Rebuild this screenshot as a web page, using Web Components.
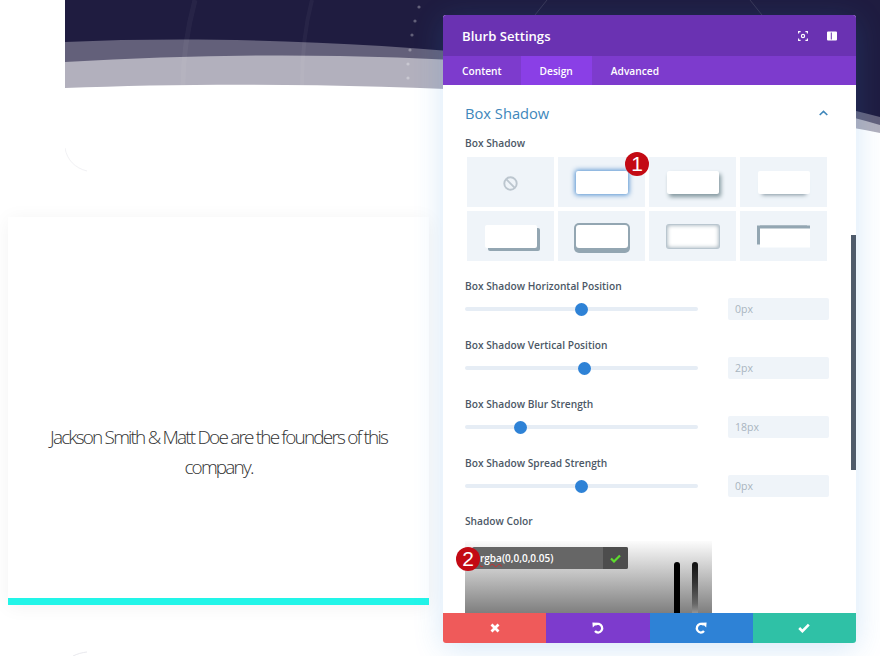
<!DOCTYPE html>
<html>
<head>
<meta charset="utf-8">
<style>
  html, body { margin: 0; padding: 0; background: #fff; }
  body { width: 880px; height: 656px; overflow: hidden; position: relative; font-family: "Open Sans", sans-serif; }
</style>
</head>
<body>
<hero-band></hero-band>
<blurb-card>Jackson Smith &amp; Matt Doe are the founders of this company.</blurb-card>
<settings-panel title="Blurb Settings">
  <section-head>Box Shadow</section-head>
  <field-label>Box Shadow</field-label>
  <shadow-presets></shadow-presets>
  <range-field label="Box Shadow Horizontal Position" value="0px" pos="50"></range-field>
  <range-field label="Box Shadow Vertical Position" value="2px" pos="51.5"></range-field>
  <range-field label="Box Shadow Blur Strength" value="18px" pos="24"></range-field>
  <range-field label="Box Shadow Spread Strength" value="0px" pos="50"></range-field>
  <field-label style="margin-top:16px">Shadow Color</field-label>
  <color-picker value="(0,0,0,0.05)"></color-picker>
</settings-panel>
<step-badge style="left:625px;top:152px">1</step-badge>
<step-badge style="left:456px;top:547px">2</step-badge>

<script>
// Decorative header band behind the panel
class HeroBand extends HTMLElement {
    constructor() {
        super();
        this.attachShadow({ mode: 'open' }).innerHTML = `
            <style>
                :host { display: block; position: absolute; left: 65px; top: 0; width: 815px; height: 656px; }
                svg { display: block; }
            </style>
            <svg width="815" height="656" viewBox="0 0 815 656">
                <path d="M815 0V133C600 90 250 78 0 88V0Z" fill="#b2b0bd"/>
                <path d="M815 0V125C600 62 300 44 0 62V0Z" fill="#63607a"/>
                <path d="M815 0V117C600 62 260 30 0 42V0Z" fill="#1f1c40"/>
                <path d="M130 0C122 30 118 60 118 85" fill="none" stroke="#fff" stroke-opacity=".04" stroke-width="5"/>
                <path d="M247 0C239 30 237 60 237 85" fill="none" stroke="#fff" stroke-opacity=".04" stroke-width="4"/>
                <path d="M482 0L470 15M685 0L697 15" fill="none" stroke="#fff" stroke-opacity=".12" stroke-width="1"/>
                <g fill="#fff" fill-opacity=".3">
                    <circle cx="354" cy="7" r="1.6"/>
                    <circle cx="350" cy="21" r="1.6"/>
                    <circle cx="347" cy="35" r="1.6"/>
                    <circle cx="345" cy="50" r="1.6"/>
                    <circle cx="343" cy="64" r="1.6"/>
                    <circle cx="343" cy="78" r="1.6"/>
                </g>
                <path d="M0 148C2 160 10 168 22 171" fill="none" stroke="#f1f1f4" stroke-width="1"/>
                <path d="M8 656C12 654 17 652.5 22 652" fill="none" stroke="#e9e9ee" stroke-width="1"/>
            </svg>`;
    }
}

class BlurbCard extends HTMLElement {
    constructor() {
        super();
        this.attachShadow({ mode: 'open' }).innerHTML = `
            <style>
                :host {
                    display: flex; align-items: center; justify-content: center; box-sizing: border-box;
                    position: absolute; left: 8px; top: 217px; width: 421px; height: 388px;
                    padding: 89px 30px 0; background: #fff;
                    border-bottom: 7px solid #22f5e8;
                    box-shadow: 0 2px 18px rgba(0,0,0,.05);
                    font: 300 19px/30px "Open Sans", sans-serif; letter-spacing: -1.82px;
                    color: #333; text-align: center;
                }
            </style>
            <slot></slot>`;
    }
}

class SettingsPanel extends HTMLElement {
    constructor() {
        super();
        this.attachShadow({ mode: 'open' }).innerHTML = `
            <style>
                :host {
                    display: flex; flex-direction: column; position: absolute; left: 443px; top: 15px;
                    width: 413px; height: 628px; background: #fff; border-radius: 3px;
                    box-shadow: 0 5px 30px rgba(43,135,218,.2); font-family: "Open Sans", sans-serif;
                }
                header {
                    height: 41px; flex: none; display: flex; align-items: center; justify-content: space-between;
                    padding: 0 19px; background: #6a32b2; color: #fff; border-radius: 3px 3px 0 0;
                    font-size: 13.1px; font-weight: 600;
                }
                .icons { display: flex; gap: 19px; }
                .icons svg { display: block; }
                nav { height: 29px; flex: none; display: flex; background: #7d3bcd; color: #fff; font-size: 10.2px; font-weight: 600; }
                nav span { display: flex; align-items: center; padding: 0 19px; }
                nav .on { background: #8a3fe6; }
                main { flex: 1; position: relative; padding: 0 26px 0 22px; overflow: hidden; }
                .thumb { position: absolute; right: 0; top: 150px; width: 5px; height: 235px; background: #4f5b6b; }
                footer { height: 30px; flex: none; display: grid; grid-template-columns: repeat(4, 1fr); position: relative; }
                footer span { display: flex; align-items: center; justify-content: center; }
                footer span:first-child { border-radius: 0 0 0 3px; }
                footer span:last-child { border-radius: 0 0 3px 0; }
            </style>
            <header>
                <span>${this.getAttribute('title')}</span>
                <span class="icons">
                    <svg width="10" height="10" viewBox="0 0 10 10" fill="none" stroke="#fff" stroke-width="1.1">
                        <path d="M.6 2.6V.6H2.6M7.4 .6h2V2.6M9.4 7.4v2h-2M2.6 9.4H.6v-2"/>
                        <circle cx="5" cy="5" r="1.6" stroke-width="1.2"/>
                    </svg>
                    <svg width="10" height="10" viewBox="0 0 10 10">
                        <path fill="#fff" fill-rule="evenodd" d="M1 .5h8a1 1 0 011 1v7a1 1 0 01-1 1H1a1 1 0 01-1-1v-7a1 1 0 011-1zM3.8 1.5v7h1v-7z"/>
                    </svg>
                </span>
            </header>
            <nav><span>Content</span><span class="on">Design</span><span>Advanced</span></nav>
            <main><slot></slot><div class="thumb"></div></main>
            <footer>
                <span style="background:#ef5a5a">
                    <svg width="10" height="10" viewBox="0 0 10 10"><path d="M1.5 1.5l7 7M8.5 1.5l-7 7" stroke="#fff" stroke-width="2.8" fill="none"/></svg>
                </span>
                <span style="background:#7d3bcd">
                    <svg width="12" height="12" viewBox="0 0 12 12" fill="none"><path d="M3 2.8A4.4 4.4 0 116.2 10.6 4.4 4.4 0 013 9" stroke="#fff" stroke-width="2.3"/><path d="M.4 .4L5.6 .8 .8 5.6z" fill="#fff"/></svg>
                </span>
                <span style="background:#2e82d6">
                    <svg width="12" height="12" viewBox="0 0 12 12" fill="none"><path d="M9 2.8A4.4 4.4 0 105.8 10.6 4.4 4.4 0 009 9" stroke="#fff" stroke-width="2.3"/><path d="M11.6 .4L6.4 .8l4.8 4.8z" fill="#fff"/></svg>
                </span>
                <span style="background:#2fc1a6">
                    <svg width="12" height="10" viewBox="0 0 12 10"><path d="M1.2 5l3.2 3.2L10.8 1.6" stroke="#fff" stroke-width="2.6" fill="none"/></svg>
                </span>
            </footer>`;
    }
}

class SectionHead extends HTMLElement {
    constructor() {
        super();
        this.attachShadow({ mode: 'open' }).innerHTML = `
            <style>
                :host {
                    display: flex; align-items: center; justify-content: space-between; height: 56px; margin-bottom: -6px;
                    font-size: 14.7px; color: #4087bb;
                }
                svg { display: block; margin-right: 2px; }
            </style>
            <slot></slot>
            <svg width="9" height="6" viewBox="0 0 9 6"><path d="M.7 5l3.8-3.6L8.3 5" fill="none" stroke="#4087bb" stroke-width="1.6"/></svg>`;
    }
}

class FieldLabel extends HTMLElement {
    constructor() {
        super();
        this.attachShadow({ mode: 'open' }).innerHTML = `
            <style>
                :host { display: block; font-size: 10.2px; line-height: 16px; font-weight: 600; color: #4c5866; }
            </style>
            <slot></slot>`;
    }
}

class ShadowPresets extends HTMLElement {
    constructor() {
        super();
        const line = '#93a6b2';
        const styles = [
            '',
            'box-shadow:0 0 5px 1px rgba(50,125,200,.85)',
            'box-shadow:2px 3px 4px 0 #84989f',
            'box-shadow:0 5px 4px -4px #7f929d',
            `box-shadow:3px 3px 0 0 ${line}`,
            `border-radius:3px;box-shadow:0 0 0 2px ${line},0 3px 0 2px ${line}`,
            'box-shadow:inset 0 0 4px 0 rgba(135,155,168,.9),0 0 0 1px #b9c6cf',
            `width:50px;height:19px;transform:translate(1px,1.5px);border-radius:0;box-shadow:-3px -3px 0 0 ${line},0 -3px 0 0 ${line}`,
        ];
        this.attachShadow({ mode: 'open' }).innerHTML = `
            <style>
                :host { display: grid; grid-template-columns: repeat(4, 87px); grid-auto-rows: 50px; gap: 4px; margin: 6px 0 0 2px; }
                div { background: #eff4f9; display: flex; align-items: center; justify-content: center; }
                i { display: block; width: 52px; height: 23px; background: #fff; border-radius: 2px; }
                svg { display: block; margin-top: 2px; }
            </style>
            ${styles.map((s, i) => i === 0
                ? `<div><svg width="15" height="15" viewBox="0 0 15 15" fill="none" stroke="#bcc6cf" stroke-width="1.9"><circle cx="7.5" cy="7.5" r="6.2"/><path d="M3.2 3.2l8.6 8.6"/></svg></div>`
                : `<div><i style="${s}"></i></div>`).join('')}`;
    }
}

class RangeField extends HTMLElement {
    constructor() {
        super();
        const label = this.getAttribute('label');
        const value = this.getAttribute('value');
        const pos = this.getAttribute('pos');
        this.attachShadow({ mode: 'open' }).innerHTML = `
            <style>
                :host { display: block; height: 59px; box-sizing: border-box; padding-top: 17px; }
                .lbl { font-size: 10.2px; line-height: 16px; font-weight: 600; color: #4c5866; }
                .row { display: flex; align-items: center; justify-content: space-between; height: 22px; margin-top: 4px; padding-right: 1px; }
                .track { position: relative; width: 233px; height: 4px; background: #e6edf5; border-radius: 2px; }
                .track b { position: absolute; top: -4.5px; width: 13px; height: 13px; margin-left: -6.5px; border-radius: 50%; background: #2e82d6; }
                .val {
                    box-sizing: border-box; width: 101px; height: 22px; padding-left: 7px; background: #eff4f9; border-radius: 2px;
                    font-size: 10.5px; font-weight: 500; line-height: 22px; color: #a9b4bf;
                }
            </style>
            <div class="lbl">${label}</div>
            <div class="row">
                <div class="track"><b style="left:${pos}%"></b></div>
                <div class="val">${value}</div>
            </div>`;
    }
}

class ColorPicker extends HTMLElement {
    constructor() {
        super();
        const value = this.getAttribute('value');
        this.attachShadow({ mode: 'open' }).innerHTML = `
            <style>
                :host {
                    display: block; position: relative; width: 247px; height: 73px; margin-top: 12px;
                    background: linear-gradient(#fcfcfc, #7d7d7d);
                }
                .bar {
                    position: absolute; left: 7px; top: 6px; width: 156px; height: 22px; display: flex; align-items: center;
                    justify-content: space-between; background: #666; border-radius: 2px; color: #fff;
                    font-size: 10px; font-weight: 600;
                }
                .bar span { padding-left: 8px; }
                .bar u { text-decoration: underline wavy #d02a2a 1px; }
                .ok { width: 25px; height: 22px; display: flex; align-items: center; justify-content: center; background: #4d4d4d; border-radius: 0 2px 2px 0; }
                .ok svg { display: block; }
                .strip { position: absolute; top: 21px; bottom: 0; width: 6px; border-radius: 3px 3px 0 0; }
            </style>
            <div class="bar"><span><u>rgba</u>${value}</span><div class="ok"><svg width="11" height="9" viewBox="0 0 11 9"><path d="M1 4.5l3 3L10 1.5" fill="none" stroke="#5ddc2e" stroke-width="2.2"/></svg></div></div>
            <div class="strip" style="left:209px;background:#000"></div>
            <div class="strip" style="left:227px;background:linear-gradient(#111,#333 40%,#666 80%,#999)"></div>`;
    }
}

class StepBadge extends HTMLElement {
    constructor() {
        super();
        this.attachShadow({ mode: 'open' }).innerHTML = `
            <style>
                :host {
                    display: flex; align-items: center; justify-content: center; position: absolute; width: 24px; height: 24px;
                    border-radius: 50%; background: #c30a14; color: #fff;
                    font: 400 21px/24px "Liberation Sans", sans-serif;
                }
            </style>
            <slot></slot>`;
    }
}

customElements.define('hero-band', HeroBand);
customElements.define('blurb-card', BlurbCard);
customElements.define('settings-panel', SettingsPanel);
customElements.define('section-head', SectionHead);
customElements.define('field-label', FieldLabel);
customElements.define('shadow-presets', ShadowPresets);
customElements.define('range-field', RangeField);
customElements.define('color-picker', ColorPicker);
customElements.define('step-badge', StepBadge);
</script>
</body>
</html>
